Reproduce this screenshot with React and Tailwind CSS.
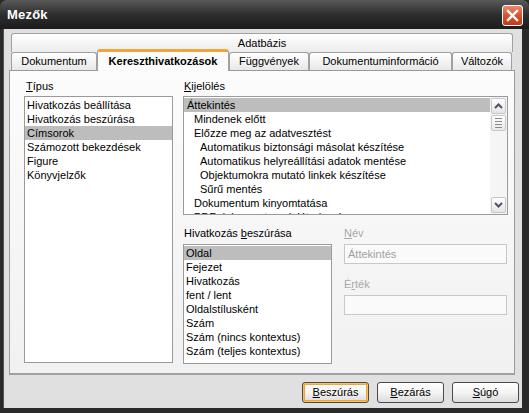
import React from "react";

const TABS = [
  { label: "Dokumentum", w: "w-[86px]" },
  { label: "Kereszthivatkozások", w: "w-[132px]", active: true },
  { label: "Függvények", w: "w-[80px]" },
  { label: "Dokumentuminformáció", w: "w-[143px]" },
  { label: "Változók", w: "w-[60px]" },
];

const TYPES = [
  "Hivatkozás beállítása",
  "Hivatkozás beszúrása",
  "Címsorok",
  "Számozott bekezdések",
  "Figure",
  "Könyvjelzők",
];

const SELECTION = [
  { text: "Áttekintés", level: 0 },
  { text: "Mindenek előtt", level: 1 },
  { text: "Előzze meg az adatvesztést", level: 1 },
  { text: "Automatikus biztonsági másolat készítése", level: 2 },
  { text: "Automatikus helyreállítási adatok mentése", level: 2 },
  { text: "Objektumokra mutató linkek készítése", level: 2 },
  { text: "Sűrű mentés", level: 2 },
  { text: "Dokumentum kinyomtatása", level: 1 },
  { text: "PDF dokumentumok létrehozása", level: 1 },
];

const FORMATS = [
  "Oldal",
  "Fejezet",
  "Hivatkozás",
  "fent / lent",
  "Oldalstílusként",
  "Szám",
  "Szám (nincs kontextus)",
  "Szám (teljes kontextus)",
];

const indent = ["pl-[3px]", "pl-[10px]", "pl-[16px]"];

function Item({ children, selected, className = "" }) {
  return (
    <div
      className={`h-[14px] leading-[14px] whitespace-nowrap ${
        selected ? "bg-[#bdbdbd]" : ""
      } ${className}`}
    >
      {children}
    </div>
  );
}

function Chevron({ up }) {
  return (
    <svg width="9" height="6" viewBox="0 0 9 6">
      <path
        d={up ? "M1 5 L4.5 1.5 L8 5" : "M1 1 L4.5 4.5 L8 1"}
        fill="none"
        stroke="#4b5568"
        strokeWidth="2"
      />
    </svg>
  );
}

function ScrollButton({ up }) {
  return (
    <div className="h-[16px] mx-[1px] flex items-center justify-center rounded-[2px] border border-[#c8c8c8] bg-gradient-to-b from-[#ffffff] to-[#e4e4e4]">
      <Chevron up={up} />
    </div>
  );
}

function Scrollbar() {
  return (
    <div className="w-[17px] flex flex-col bg-[#f5f5f5] py-[1px]">
      <ScrollButton up />
      <div className="h-[16px] mx-[1px] mt-[1px] flex flex-col items-center justify-center gap-[2px] rounded-[2px] border border-[#c8c8c8] bg-gradient-to-b from-[#ffffff] to-[#e8e8e8]">
        <div className="w-[7px] h-[1px] bg-[#8a8a8a]" />
        <div className="w-[7px] h-[1px] bg-[#8a8a8a]" />
        <div className="w-[7px] h-[1px] bg-[#8a8a8a]" />
        <div className="w-[7px] h-[1px] bg-[#8a8a8a]" />
      </div>
      <div className="flex-1" />
      <ScrollButton />
    </div>
  );
}

function Label({ children, disabled, className = "" }) {
  return (
    <div
      className={`h-[13px] leading-[13px] ${
        disabled ? "text-[#a8a8a8]" : "text-black"
      } ${className}`}
    >
      {children}
    </div>
  );
}

function Button({ children, isDefault }) {
  return (
    <div
      className={`w-[67px] h-[21px] rounded-[3px] border border-[#4a4a4a] flex items-center justify-center bg-gradient-to-b from-[#ffffff] via-[#f4f4f4] to-[#dcdcdc] ${
        isDefault ? "shadow-[inset_0_0_0_1px_#f6c35a,inset_0_0_0_2px_#f0a53c]" : ""
      }`}
    >
      {children}
    </div>
  );
}

export default function App() {
  return (
    <div className="w-[529px] h-[413px] flex flex-col bg-[#2a2a2a] text-[11px] text-black font-['Liberation_Sans',Arial,sans-serif] overflow-hidden">
      {/* title bar */}
      <div className="h-[29px] shrink-0 flex items-center justify-between pl-[7px] pr-[6px] rounded-t-[7px] bg-gradient-to-b from-[#5a5a5a] via-[#2e2e2e] to-[#1c1c1c]">
        <span className="text-white font-bold text-[13px] tracking-[0.2px]">
          Mezők
        </span>
        <div className="w-[21px] h-[21px] mt-[2px] rounded-[3px] border border-white bg-gradient-to-b from-[#ea8a6a] via-[#d9502a] to-[#c23a18] flex items-center justify-center">
          <svg width="13" height="13" viewBox="0 0 13 13">
            <path
              d="M2 2 L11 11 M11 2 L2 11"
              stroke="#ffffff"
              strokeWidth="2.4"
              strokeLinecap="square"
            />
          </svg>
        </div>
      </div>

      {/* body */}
      <div className="flex-1 flex flex-col ml-[3px] mr-[7px] mb-[5px] bg-[#e0e0e0] pl-[5px] pr-[7px] pt-[4px] border-l border-[#555]">
        {/* tab row 1 */}
        <div className="mx-[2px] h-[19px] shrink-0 flex items-center justify-center rounded-t-[3px] border border-b-0 border-[#a0a0a0] bg-gradient-to-b from-[#ffffff] to-[#ececec]">
          Adatbázis
        </div>
        {/* tab row 2 */}
        <div className="mx-[2px] h-[18px] shrink-0 flex items-end relative z-10">
          {TABS.map((t) =>
            t.active ? (
              <div
                key={t.label}
                className={`${t.w} h-[22px] -mb-[1px] flex items-center justify-center font-bold rounded-t-[3px] border-x border-[#a0a0a0] border-t-[3px] border-t-[#f0a53c] bg-[#fbfbfb]`}
              >
                {t.label}
              </div>
            ) : (
              <div
                key={t.label}
                className={`${t.w} h-[18px] flex items-center justify-center rounded-t-[3px] border border-b-0 border-[#a0a0a0] bg-gradient-to-b from-[#ffffff] to-[#e8e8e8]`}
              >
                {t.label}
              </div>
            )
          )}
        </div>

        {/* panel */}
        <div className="h-[305px] shrink-0 flex gap-[10px] border border-[#9a9a9a] border-b-2 border-b-[#a0a0a0] bg-gradient-to-b from-[#fcfcfc] to-[#f1f1f1] pt-[9px] pl-[14px]">
          {/* left column */}
          <div className="w-[149px] flex flex-col">
            <Label className="pl-[2px]">
              <u>T</u>ípus
            </Label>
            <div className="mt-[3px] h-[267px] border border-[#9a9a9a] bg-white pt-[1px]">
              {TYPES.map((t) => (
                <Item key={t} selected={t === "Címsorok"} className="pl-[2px]">
                  {t}
                </Item>
              ))}
            </div>
          </div>

          {/* right column */}
          <div className="w-[325px] flex flex-col">
            <Label className="pl-[1px]">
              <u>K</u>ijelölés
            </Label>
            <div className="mt-[3px] h-[119px] flex border border-[#9a9a9a] bg-white overflow-hidden">
              <div className="flex-1 pt-[1px] overflow-hidden">
                {SELECTION.map((s, i) => (
                  <Item key={s.text} selected={i === 0} className={indent[s.level]}>
                    {s.text}
                  </Item>
                ))}
              </div>
              <Scrollbar />
            </div>

            <div className="mt-[12px] flex gap-[12px]">
              <div className="w-[149px] flex flex-col">
                <Label className="pl-[1px]">
                  Hivatkozás <u>b</u>eszúrása
                </Label>
                <div className="mt-[4px] h-[120px] border border-[#9a9a9a] bg-white pt-[1px]">
                  {FORMATS.map((f, i) => (
                    <Item key={f} selected={i === 0} className="pl-[2px]">
                      {f}
                    </Item>
                  ))}
                </div>
              </div>
              <div className="w-[163px] flex flex-col">
                <Label disabled>
                  <u>N</u>év
                </Label>
                <div className="mt-[4px] h-[20px] border border-[#c8c8c8] bg-[#fafafa] flex items-center pl-[3px] text-[#a0a0a0]">
                  Áttekintés
                </div>
                <Label disabled className="mt-[14px]">
                  É<u>r</u>ték
                </Label>
                <div className="mt-[4px] h-[20px] border border-[#c8c8c8] bg-[#fafafa]" />
              </div>
            </div>
          </div>
        </div>

        {/* buttons */}
        <div className="mt-[7px] flex justify-end gap-[8px] -mr-[4px]">
          <Button isDefault>
            <span>
              <u>B</u>eszúrás
            </span>
          </Button>
          <Button>
            <span>
              <u>B</u>ezárás
            </span>
          </Button>
          <Button>
            <span>
              <u>S</u>úgó
            </span>
          </Button>
        </div>
      </div>
    </div>
  );
}
